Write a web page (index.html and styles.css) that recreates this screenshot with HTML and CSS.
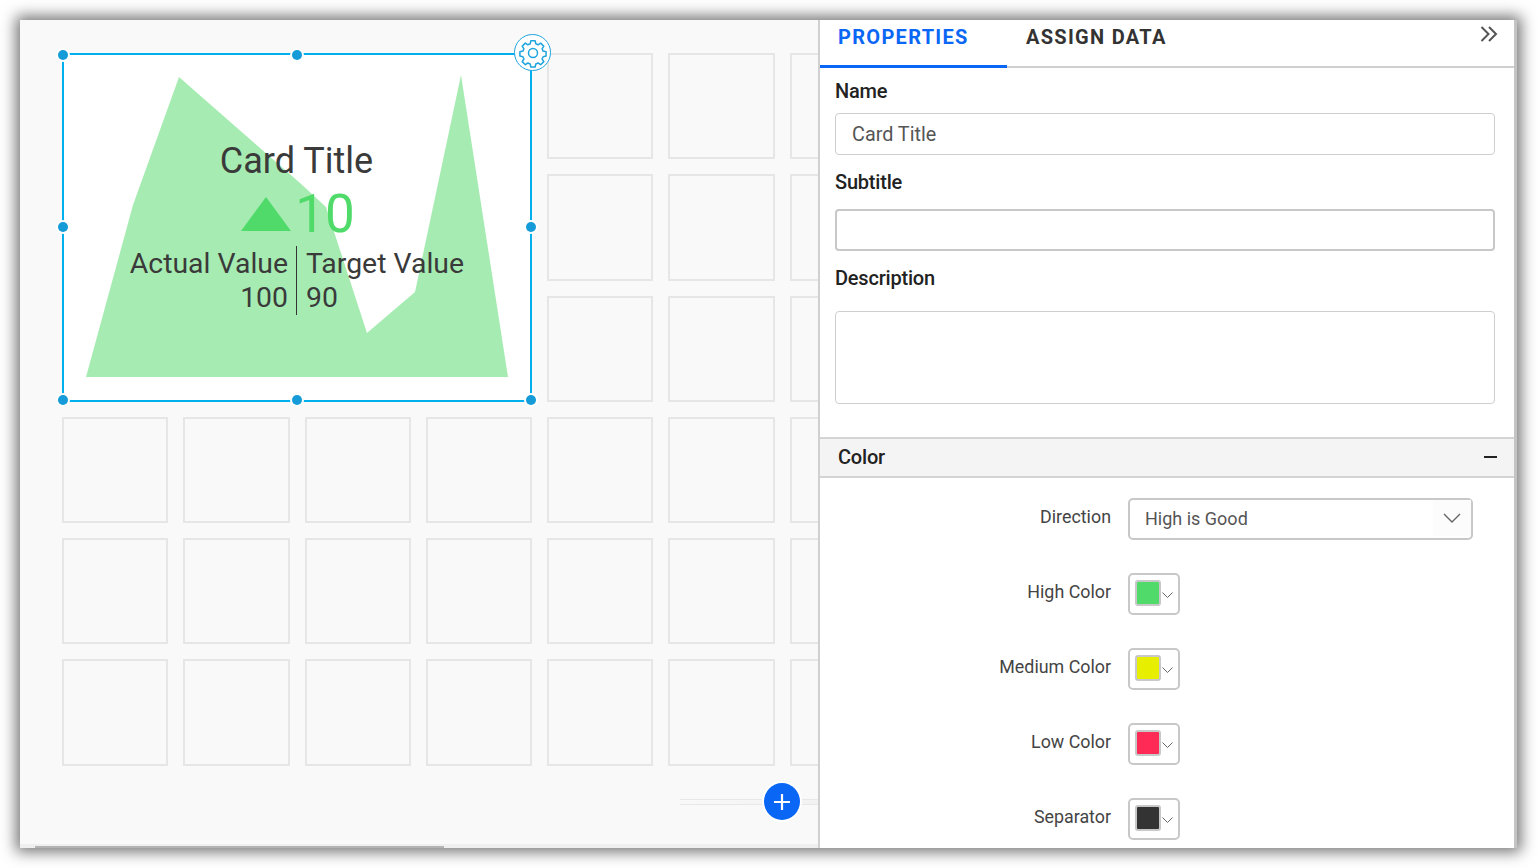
FILE: index.html
```html
<!DOCTYPE html>
<html lang="en">
<head>
    <meta charset="UTF-8">
    <title>Card properties</title>
    <link rel="stylesheet" href="styles.css">
</head>
<body>
    <div class="frame">
        <div class="canvas">
            <div class="grid">
                <div class="cell"></div><div class="cell"></div><div class="cell"></div><div class="cell"></div><div class="cell"></div><div class="cell"></div><div class="cell"></div>
                <div class="cell"></div><div class="cell"></div><div class="cell"></div><div class="cell"></div><div class="cell"></div><div class="cell"></div><div class="cell"></div>
                <div class="cell"></div><div class="cell"></div><div class="cell"></div><div class="cell"></div><div class="cell"></div><div class="cell"></div><div class="cell"></div>
                <div class="cell"></div><div class="cell"></div><div class="cell"></div><div class="cell"></div><div class="cell"></div><div class="cell"></div><div class="cell"></div>
                <div class="cell"></div><div class="cell"></div><div class="cell"></div><div class="cell"></div><div class="cell"></div><div class="cell"></div><div class="cell"></div>
                <div class="cell"></div><div class="cell"></div><div class="cell"></div><div class="cell"></div><div class="cell"></div><div class="cell"></div><div class="cell"></div>
            </div>

            <!-- selected widget -->
            <div class="widget">
                <svg class="spark" width="470" height="348" viewBox="0 0 470 348">
                    <polygon points="24,323 71,151 117,23 238,129 264,153 305,279 353,238 399,21 446,323" fill="#a6ecb2"/>
                </svg>
                <div class="card">
                    <div class="card-title">Card Title</div>
                    <div class="card-value">
                        <span class="triangle"></span>
                        <span class="value-num">10</span>
                    </div>
                    <div class="card-compare">
                        <div class="compare-left">Actual Value<br>100</div>
                        <div class="compare-right">Target Value<br>90</div>
                    </div>
                </div>
                <span class="handle h-tl"></span>
                <span class="handle h-tc"></span>
                <span class="handle h-ml"></span>
                <span class="handle h-mr"></span>
                <span class="handle h-bl"></span>
                <span class="handle h-bc"></span>
                <span class="handle h-br"></span>
                <span class="gear">
                    <svg width="30" height="30" viewBox="0 0 30 30" fill="none" stroke="#1ea4de" stroke-width="1.500" stroke-linejoin="round">
                        <path d="M12.8 2.8h4.4l.6 3 2.3 1 2.600-1.700 3.100 3.100-1.700 2.600 1 2.300 3 .6v4.400l-3 .6-1 2.300 1.700 2.600-3.100 3.100-2.600-1.700-2.300 1-.6 3h-4.400l-.6-3-2.300-1-2.600 1.700-3.100-3.100 1.700-2.600-1-2.300-3-.6v-4.400l3-.6 1-2.300-1.700-2.600 3.100-3.100 2.600 1.700 2.300-1z"/>
                        <circle cx="15" cy="15" r="4.500"/>
                    </svg>
                </span>
            </div>

            <div class="add-line"></div>
            <button class="add-btn">
                <svg width="20" height="20" viewBox="0 0 20 20"><path d="M10 2v16M2 10h16" stroke="#fff" stroke-width="2.200"/></svg>
            </button>

            <div class="hscroll"><div class="hscroll-thumb"></div></div>
        </div>

        <div class="panel">
            <div class="tabs">
                <div class="tab tab-active">PROPERTIES</div>
                <div class="tab">ASSIGN DATA</div>
                <svg class="collapse" width="18" height="16" viewBox="0 0 18 16" fill="none" stroke="#555" stroke-width="2">
                    <path d="M1.500 1l7 7-7 7M9 1l7 7-7 7"/>
                </svg>
            </div>

            <div class="fields">
                <label class="field-label">Name</label>
                <div class="input">Card Title</div>
                <label class="field-label label-sub">Subtitle</label>
                <div class="input input-strong"></div>
                <label class="field-label label-desc">Description</label>
                <div class="textarea"></div>
            </div>

            <div class="section-head">
                <span>Color</span>
                <span class="minus"></span>
            </div>

            <div class="rows">
                <div class="row">
                    <div class="row-label">Direction</div>
                    <div class="select">
                        <span>High is Good</span>
                        <span class="select-arrow">
                            <svg width="18" height="10" viewBox="0 0 18 10" fill="none" stroke="#666" stroke-width="1.400"><path d="M1 1l8 8 8-8"/></svg>
                        </span>
                    </div>
                </div>
                <div class="row">
                    <div class="row-label">High Color</div>
                    <div class="picker">
                        <span class="swatch swatch-high"></span>
                        <svg width="11" height="6" viewBox="0 0 11 6" fill="none" stroke="#666"><path d="M.5 .5l5 5 5-5"/></svg>
                    </div>
                </div>
                <div class="row">
                    <div class="row-label">Medium Color</div>
                    <div class="picker">
                        <span class="swatch swatch-medium"></span>
                        <svg width="11" height="6" viewBox="0 0 11 6" fill="none" stroke="#666"><path d="M.5 .5l5 5 5-5"/></svg>
                    </div>
                </div>
                <div class="row">
                    <div class="row-label">Low Color</div>
                    <div class="picker">
                        <span class="swatch swatch-low"></span>
                        <svg width="11" height="6" viewBox="0 0 11 6" fill="none" stroke="#666"><path d="M.5 .5l5 5 5-5"/></svg>
                    </div>
                </div>
                <div class="row">
                    <div class="row-label">Separator</div>
                    <div class="picker">
                        <span class="swatch swatch-sep"></span>
                        <svg width="11" height="6" viewBox="0 0 11 6" fill="none" stroke="#666"><path d="M.5 .5l5 5 5-5"/></svg>
                    </div>
                </div>
            </div>
        </div>
    </div>
</body>
</html>
```

FILE: styles.css
```css
* {
    margin: 0;
    padding: 0;
    box-sizing: border-box;
}
html, body {
    height: 100%;
    background: #fff;
    overflow: hidden;
}
body {
    padding: 20px 20px 20px 20px;
    font-family: Roboto, "Liberation Sans", sans-serif;
    color: #333;
}
.frame {
    display: flex;
    width: 1497px;
    height: 828px;
    background: #fff;
    box-shadow: 0 0 14px 4px rgba(0, 0, 0, .55);
    overflow: hidden;
}

/* left design surface */
.canvas {
    position: relative;
    flex: none;
    width: 800px;
    height: 828px;
    padding: 33px 0 0 42px;
    background: #f9f9f9;
    border-right: 2px solid #d0d0d0;
    overflow: hidden;
}
.grid {
    display: grid;
    grid-template-columns: repeat(7, 106.25px);
    grid-auto-rows: 106.25px;
    gap: 15px;
}
.cell {
    border: 2px solid #e6e6e6;
}

.widget {
    position: absolute;
    left: 42px;
    top: 33px;
    width: 470px;
    height: 349px;
    background: #fff;
    border: 2px solid #00b0ee;
}
.spark {
    position: absolute;
    left: -2px;
    top: -1px;
}
.card {
    position: absolute;
    left: -1px;
    top: -1px;
    width: 470px;
    height: 348px;
    padding-top: 85px;
    display: flex;
    flex-direction: column;
    align-items: center;
    color: #3a3a3a;
}
.card-title {
    margin-right: 3px;
    font-size: 36px;
    line-height: 44px;
}
.card-value {
    display: flex;
    align-items: flex-end;
    height: 60px;
    margin-top: 1px;
    color: #4fda6a;
}
.triangle {
    width: 0;
    height: 0;
    margin: 0 4px 13px 0;
    border-left: 25px solid transparent;
    border-right: 25px solid transparent;
    border-bottom: 34px solid #4fda6a;
}
.value-num {
    font-size: 53px;
    line-height: 60px;
}
.card-compare {
    display: flex;
    justify-content: center;
    width: 100%;
    margin-top: 2px;
    padding-top: 0;
    font-size: 28.400px;
    line-height: 34px;
}
.compare-left {
    width: 234px;
    height: 69px;
    padding: 1px 8px 0 0;
    text-align: right;
    border-right: 1px solid #333;
}
.compare-right {
    width: 236px;
    padding: 1px 0 0 9px;
}

.handle {
    position: absolute;
    width: 10px;
    height: 10px;
    margin: -5px 0 0 -5px;
    border-radius: 50%;
    background: #149bd8;
    box-shadow: 0 0 0 2px #fff;
}
.h-tl { left: -1px; top: 0; }
.h-tc { left: 233px; top: 0; }
.h-ml { left: -1px; top: 172px; }
.h-mr { left: 467px; top: 172px; }
.h-bl { left: -1px; top: 345px; }
.h-bc { left: 233px; top: 345px; }
.h-br { left: 467px; top: 345px; }

.gear {
    position: absolute;
    left: 450px;
    top: -21px;
    width: 37px;
    height: 37px;
    display: flex;
    align-items: center;
    justify-content: center;
    border-radius: 50%;
    background: #fff;
    border: 1.500px solid #1ea4de;
}

.add-line {
    position: absolute;
    left: 660px;
    top: 779px;
    width: 140px;
    height: 6px;
    border-top: 1px solid #e8e8e8;
    border-bottom: 1px solid #e8e8e8;
    background: linear-gradient(90deg, rgba(249, 249, 249, 0), #f2f2f2);
}
.add-btn {
    position: absolute;
    left: 744px;
    top: 763px;
    width: 36px;
    height: 37px;
    display: flex;
    align-items: center;
    justify-content: center;
    border: none;
    border-radius: 50%;
    background: #0a66f5;
    box-shadow: 0 0 0 2px #fff;
}

.hscroll {
    position: absolute;
    left: 0;
    right: 0;
    bottom: 0;
    height: 4px;
    background: #efefef;
}
.hscroll-thumb {
    width: 409px;
    height: 2px;
    margin: 2px 0 0 15px;
    background: #b3b3b3;
}

/* right properties panel */
.panel {
    position: relative;
    flex: none;
    width: 697px;
    height: 828px;
    background: #fff;
    border-right: 3px solid #c4c4c4;
    overflow: hidden;
}
.panel::after {
    content: "";
    position: absolute;
    right: -3px;
    top: 0;
    width: 1px;
    height: 48px;
    background: #0a66f5;
}
.tabs {
    position: relative;
    display: flex;
    height: 48px;
    border-bottom: 2px solid #cfcfcf;
}
.tab {
    height: 48px;
    padding: 5px 37px 0 19px;
    font-size: 20px;
    line-height: 24px;
    font-weight: 700;
    letter-spacing: 1.300px;
    color: #333;
}
.tab-active {
    width: 187px;
    padding-left: 18px;
    padding-right: 0;
    color: #0a66f5;
    border-bottom: 3px solid #0a66f5;
}
.collapse {
    position: absolute;
    right: 16px;
    top: 6px;
}
.fields {
    height: 369px;
    padding: 11px 19px 0 15px;
}
.field-label {
    display: block;
    font-size: 20px;
    line-height: 24px;
    font-weight: 500;
    color: #222;
    letter-spacing: -.2px;
}
.input {
    height: 42px;
    margin-top: 10px;
    padding: 0 16px;
    font-size: 19.800px;
    line-height: 42px;
    color: #555;
    border: 1px solid #cfcfcf;
    border-radius: 4px;
}
.input-strong {
    margin-top: 15px;
    border: 2px solid #c8c8c8;
}
.label-sub {
    margin-top: 15px;
}
.label-desc {
    margin-top: 15px;
}
.textarea {
    height: 93px;
    margin-top: 21px;
    border: 1px solid #cfcfcf;
    border-radius: 4px;
}
.section-head {
    display: flex;
    justify-content: space-between;
    align-items: center;
    height: 41px;
    padding: 0 17px 2px 18px;
    font-size: 20px;
    font-weight: 500;
    letter-spacing: -.2px;
    color: #222;
    background: #f4f4f4;
    border-top: 2px solid #d4d4d4;
    border-bottom: 2px solid #d4d4d4;
}
.minus {
    width: 13px;
    height: 2px;
    background: #222;
}
.rows {
    display: flex;
    flex-direction: column;
    gap: 33px;
    padding: 20px 0 0 0;
}
.row {
    display: flex;
    height: 42px;
}
.row-label {
    width: 291px;
    padding-top: 7px;
    font-size: 17.850px;
    line-height: 24px;
    text-align: right;
    color: #444;
}
.select {
    display: flex;
    justify-content: space-between;
    align-items: center;
    width: 345px;
    height: 42px;
    margin-left: 17px;
    padding: 0 0 2px 15px;
    font-size: 18px;
    color: #555;
    border: 2px solid #c8c8c8;
    border-radius: 5px;
}
.select-arrow {
    display: flex;
    align-items: center;
    justify-content: center;
    width: 38px;
    height: 36px;
    background: #fcfcfc;
}
.picker {
    display: flex;
    align-items: center;
    gap: 1px;
    width: 52px;
    height: 42px;
    margin-left: 17px;
    padding-left: 5px;
    border: 2px solid #c8c8c8;
    border-radius: 5px;
}
.swatch {
    width: 26px;
    height: 26px;
    margin-top: -3px;
    border: 2px solid #c8c8c8;
    border-radius: 3px;
}
.swatch-high { background: #4fda6a; }
.swatch-medium { background: #e8ee00; }
.swatch-low { background: #ff2a55; }
.swatch-sep { background: #333; }
.picker svg {
    margin-top: 2px;
}
```
